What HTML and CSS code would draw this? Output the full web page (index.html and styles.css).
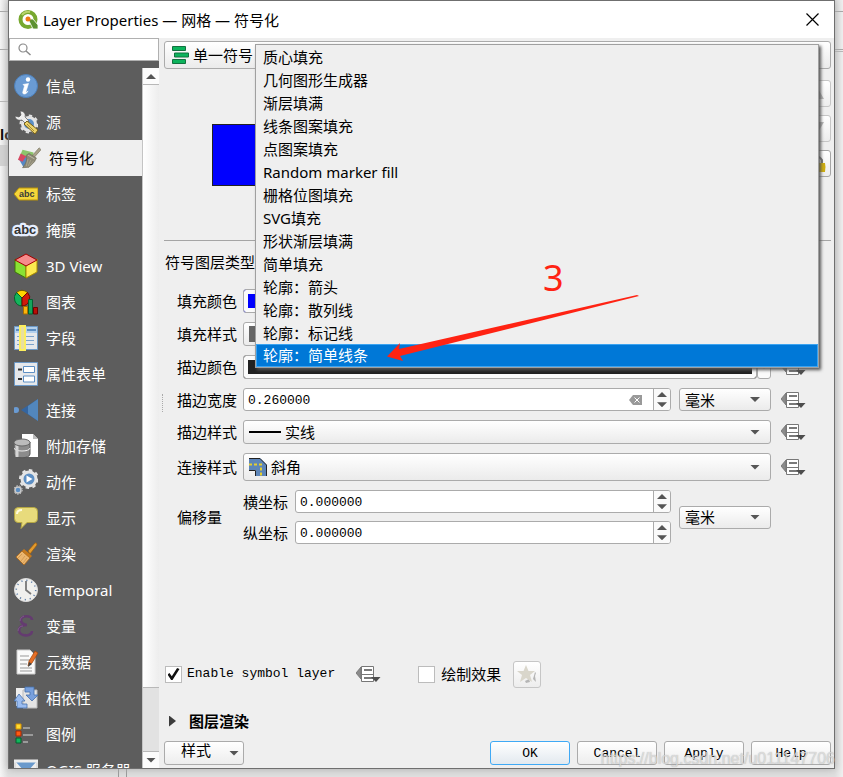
FILE: index.html
```html
<!DOCTYPE html>
<html lang="zh-CN">
<head>
<meta charset="utf-8">
<title>Layer Properties — 网格 — 符号化</title>
<link rel="stylesheet" href="styles.css">
</head>
<body>
<svg class="defs" aria-hidden="true">
  <symbol id="override" viewBox="0 0 25 18">
    <path d="M0 8L5 2v12z" fill="#8b8b8b" stroke="#6e6e6e" stroke-width=".8"/>
    <path d="M5.500 1.500h12v15h-12z" fill="#fff" stroke="#777"/>
    <path d="M5 9.500h13" stroke="#777"/>
    <path d="M8 5h8M8 13h14" stroke="#4d4d4d" stroke-width="1.500"/>
    <path d="M15 12h9.500L20 17z" fill="#4d4d4d"/>
  </symbol>
</svg>
<div class="backdrop" aria-hidden="true"><b>lo</b></div>
<div class="window">
  <header class="titlebar">
    <svg width="21" height="20" viewBox="0 0 21 20">
      <circle cx="10" cy="9.500" r="7.500" fill="none" stroke="#77a82f" stroke-width="4"/>
      <path d="M4 5a7.500 7.500 0 0 1 8-3" fill="none" stroke="#b8d46b" stroke-width="2"/>
      <path d="M10 9h5l5 6v4h-5z" fill="#5c9130" stroke="#fff" stroke-width=".8"/>
      <circle cx="10" cy="9" r="2.500" fill="#ee7913"/>
    </svg>
    <h1>Layer Properties — 网格 — 符号化</h1>
    <button class="close" aria-label="关闭"><svg width="13" height="13" viewBox="0 0 13 13"><path d="M.5.500l12 12M12.500.500l-12 12" stroke="#000" stroke-width="1.200"/></svg></button>
  </header>
  <div class="content">
    <aside class="sidebar">
      <label class="search">
        <svg width="13" height="13" viewBox="0 0 13 13"><circle cx="5" cy="5" r="4" fill="none" stroke="#8a8a8a" stroke-width="1.200"/><path d="M8 8l4.500 4" stroke="#8a8a8a" stroke-width="1.500"/></svg>
        <input type="text" aria-label="搜索">
      </label>
      <div class="side-body">
        <nav class="pages">
          <a href="#"><svg viewBox="0 0 24 24"><circle cx="12" cy="12" r="11.500" fill="#6a9bd3" stroke="#4d7fb8"/><circle cx="14" cy="5.500" r="2.200" fill="#fff"/><path d="M9 10.500l5.500-1-2.500 8c-.3 1 1 .8 2-.6-1 3.500-6 4.300-5.200 1.200L10.500 12z" fill="#fff" stroke="#fff" stroke-width=".6"/></svg>信息</a>
          <a href="#"><svg viewBox="0 0 24 24"><circle cx="15" cy="14" r="6.500" fill="#5d8fc4" stroke="#e3e3e3" stroke-width="3"/><circle cx="15" cy="14" r="8.500" fill="none" stroke="#e3e3e3" stroke-width="2" stroke-dasharray="3.300 3.300"/><path d="M1 6l4 1 2-2-1-4c4 0 6 3 5 6l4 4-3 3-4-4C4 11 1 9 1 6z" fill="#eee" stroke="#555" stroke-width=".7"/><path d="M10 14l3-3 11 9-3 4z" fill="#ecd36a" stroke="#765f18"/><path d="M13 14l7 7" stroke="#a88a30"/></svg>源</a>
          <a href="#" class="current" aria-current="page"><svg viewBox="0 0 26 24"><path d="M6 3l12 3-2 8-13-4z" fill="#8cc56c"/><path d="M2 13l8-3 6 6-9 6z" fill="#5688c4"/><path d="M4 7l6 3-4 6-5-2z" fill="#d84762"/><path d="M16 10l8-9 2 2-8 9z" fill="#aaa38a" stroke="#77735f" stroke-width=".7"/><path d="M10 9l3-2 8 5-2 4-6 6-7 .5c4-5 5-8 4-13.500z" fill="#8d8976" stroke="#6d6957" stroke-width=".7"/><path d="M12 13l-2 8M15 14l-3 7M18 15l-4 5" stroke="#aaa58d"/><path d="M12 9l7 4" stroke="#c2bea8"/></svg>符号化</a>
          <a href="#"><svg viewBox="0 0 24 24"><path d="M0 12l5-6h19v12H5z" fill="#f5d63a" stroke="#b8920a"/><text x="5" y="15" class="tag-text">abc</text></svg>标签</a>
          <a href="#"><svg viewBox="0 0 26 24" overflow="visible"><text x="0" y="16" class="mask-text">abc</text></svg>掩膜</a>
          <a href="#"><svg viewBox="0 0 24 26"><path d="M1 6l11 6v13L1 19z" fill="#8ae234" stroke="#3d7809"/><path d="M23 6l-11 6v13l11-6z" fill="#fce94f" stroke="#a98b00"/><path d="M12 1l11 6-11 6L1 7z" fill="#f78c8c" stroke="#a40000"/></svg>3D View</a>
          <a href="#"><svg viewBox="0 0 24 26"><path d="M8 9L2.500 3.500a8 8 0 0 1 11 0z" fill="#ffd500" stroke="#705900"/><path d="M8 9L2.500 3.500A8 8 0 0 0 8 17z" fill="#14b45c" stroke="#04602c"/><path d="M8 9l5.500-5.500A8 8 0 0 1 8 17z" fill="#d11a0b" stroke="#6d0a00"/><path d="M9.500 17.500h4V25h-4z" fill="#fcb40b" stroke="#a86d00"/><path d="M14.500 10.500h4V25h-4z" fill="#14a45c" stroke="#045f30"/><path d="M19.500 18.500h4V25h-4z" fill="#b90e08" stroke="#6d0000"/></svg>图表</a>
          <a href="#"><svg viewBox="0 0 24 26"><path d="M.500 1.500h23v23H.500z" fill="#e6e8eb" stroke="#6c99c7"/><path d="M1 2h22v6H1z" fill="#b4d0ec"/><path d="M13 5h9M2 5h3" stroke="#5d8fc4" stroke-width="2"/><path d="M3 11.500h17M3 15.500h17M3 19.500h17" stroke="#7ca3cc"/><path d="M5 0h7v26H5z" fill="#fcee5d"/><path d="M7 2h3v22H7z" fill="#e8dfa0"/></svg>字段</a>
          <a href="#"><svg viewBox="0 0 24 24"><path d="M.500.500h23v23H.500z" fill="#e6e8eb" stroke="#6c99c7"/><path d="M9.500 4.500h11v6h-11zM9.500 14h11v6h-11z" fill="#fff" stroke="#5d8fc4"/><path d="M4 7.500h4M4 17h4" stroke="#333" stroke-width="2"/></svg>属性表单</a>
          <a href="#"><svg viewBox="0 0 24 24"><circle cx="2" cy="12" r="3" fill="#6a9bd3"/><path d="M7 12L24 1v22z" fill="#3465a0"/><path d="M14 8l10-7v22l-10-7z" fill="#5287bd"/></svg>连接</a>
          <a href="#"><svg viewBox="0 0 24 26"><path d="M8 1h11l5 5v18H8z" fill="#fff"/><path d="M19 1v5h5z" fill="#bbb"/><path d="M0 9v12c0 5 16 5 16 0V9z" fill="#8b8b8b" stroke="#555"/><path d="M0 15c0 4 16 4 16 0" fill="none" stroke="#eee"/><path d="M3 12v12" stroke="#d5d5d5" stroke-width="3"/><ellipse cx="8" cy="9.500" rx="8" ry="3.500" fill="#bbb" stroke="#666"/></svg>附加存储</a>
          <a href="#"><svg viewBox="0 0 24 26"><circle cx="15" cy="10" r="7" fill="#5d8fc4" stroke="#e5e5e5" stroke-width="3"/><circle cx="15" cy="10" r="9" fill="none" stroke="#e5e5e5" stroke-width="2" stroke-dasharray="3.500 3.500"/><path d="M12.500 6.500v7l6-3.500z" fill="#fff"/><circle cx="4" cy="21" r="3" fill="#5d8fc4" stroke="#ccc" stroke-width="1.500"/><circle cx="4" cy="21" r="4.300" fill="none" stroke="#ccc" stroke-dasharray="1.500 1.500"/></svg>动作</a>
          <a href="#"><svg viewBox="0 0 24 24"><path d="M4 1.500h16q3.500 0 3.500 4v7q0 4-3.500 4h-7L7 22.500l1-6H4q-3.500 0-3.500-4v-7q0-4 3.500-4z" fill="#e8db7c" stroke="#b5a744"/><path d="M3 8q0-4 5-4" stroke="#fffce0" stroke-width="2" fill="none"/></svg>显示</a>
          <a href="#"><svg viewBox="0 0 24 24"><path d="M14 9l7-8q2-1 2 2l-7 9z" fill="#e39a2d" stroke="#9a5c0b" stroke-width=".7"/><path d="M8 9l8 7-6 7-8-8z" fill="#ebb66f" stroke="#a86518" stroke-width=".8"/><path d="M10 7l8 7-2 2-8-7z" fill="#c77a1d"/><path d="M8 12l-4 4M11 14l-4 5M13 16l-4 5" stroke="#c98f48" stroke-width=".7"/></svg>渲染</a>
          <a href="#"><svg viewBox="0 0 24 24"><circle cx="12" cy="12" r="11.500" fill="#f0f0ee" stroke="#ddd"/><circle cx="12" cy="12" r="9.700" fill="none" stroke="#5d7ea8" stroke-width="1.500" stroke-dasharray="1.200 3.880"/><path d="M12 3v9l5 4" fill="none" stroke="#777" stroke-width="1.800"/></svg>Temporal</a>
          <a href="#"><svg viewBox="0 0 24 24"><path d="M18 6c0-5-11-5-11 0 0 3 3 5 6 5-5 0-8 2-8 5 0 7 13 7 13 1" fill="none" stroke="#643b70" stroke-width="2.600"/><path d="M6 7c0-3 2-4 4-5M4 17c0-3 2-5 5-5" fill="none" stroke="#8a6496" stroke-width=".7"/></svg>变量</a>
          <a href="#"><svg viewBox="0 0 24 26"><path d="M3 1h13l5 5v19H3z" fill="#fafafa" stroke="#ccc"/><path d="M6 7h9M6 11h10M6 15h7M6 19h12M6 22h12" stroke="#999"/><path d="M14 17l1-5 6-10 3 2-6 10z" fill="#e66f27" stroke="#a0460b" stroke-width=".7"/><path d="M14 18l1-5 3 2z" fill="#444"/></svg>元数据</a>
          <a href="#"><svg viewBox="0 0 24 24"><path d="M2 2h12v18H2z" fill="#eee"/><path d="M9 4h14v18H9z" fill="#e4e4e4" stroke="#bbb"/><path d="M11 1h9v8h4l-6 6-6-6h4V6h-5z" fill="#78a0dd" stroke="#456eaa" stroke-width=".8"/><path d="M13 22H3v-7H0l5-7 6 7H8v3h5z" fill="#9abcf0" stroke="#456eaa" stroke-width=".8"/></svg>相依性</a>
          <a href="#"><svg viewBox="0 0 24 24"><path d="M2 2h5v5H2z" fill="#ffdc32" stroke="#d99300"/><path d="M2 9h5v5H2z" fill="#ff5a14" stroke="#a82900"/><path d="M2 16h5v5H2z" fill="#10b55c" stroke="#04602c"/><path d="M9 6h7M9 13h10M9 20h5" stroke="#9a9a9a" stroke-width="2"/></svg>图例</a>
          <a href="#"><svg viewBox="0 0 24 24"><path d="M1 3h22v18H1z" fill="#6999cc" stroke="#ddd" stroke-width="2"/><path d="M2 4l8 9-8 7zM22 4l-8 9 8 7z" fill="#eee"/><path d="M0 3h24" stroke="#eee" stroke-width="3"/></svg>QGIS 服务器</a>
        </nav>
        <div class="scrollbar"><button aria-label="向上"><i class="tri up"></i></button><div class="thumb"></div><div class="track"></div><button aria-label="向下"><i class="tri"></i></button></div>
      </div>
    </aside>
    <div class="splitter"></div>
    <main>
      <div class="combo renderer">
        <svg width="18" height="18" viewBox="0 0 18 18"><path d="M1.500.500h13v4h-13zM3.500 7h14v4h-14zM1.500 13.500h13v4h-13z" fill="#0cb35c" stroke="#12713f"/></svg>
        <select aria-label="渲染器"><option>单一符号</option></select>
      </div>
      <section class="preview">
        <div class="swatch"></div>
        <div class="tools">
          <button aria-label="上移"><svg width="16" height="16" viewBox="0 0 16 16"><path d="M8 1l7 12H1z" fill="#b8b8b8"/></svg></button>
          <button aria-label="下移"><svg width="16" height="16" viewBox="0 0 16 16"><path d="M8 13l7-12H1z" fill="#b8b8b8"/></svg></button>
          <button class="on" aria-label="锁定"><svg width="18" height="18" viewBox="0 0 18 18"><path d="M4 8V5q5-7 10 0v3" fill="none" stroke="#777" stroke-width="2"/><path d="M1 8h16q1 4 0 9H1z" fill="#cfae10"/></svg></button>
        </div>
      </section>
      <h2>符号图层类型</h2>
      <div class="form">
        <label for="fill-color">填充颜色</label>
        <div class="color blue"><button id="fill-color"></button><button aria-label="填充颜色选项"><i class="tri"></i></button></div>
        <button class="override" aria-label="覆盖填充颜色"><svg><use href="#override"/></svg></button>

        <label for="fill-style">填充样式</label>
        <div class="combo h24"><i class="brush"></i><select id="fill-style"></select></div>
        <button class="override" aria-label="覆盖填充样式"><svg><use href="#override"/></svg></button>

        <label for="stroke-color">描边颜色</label>
        <div class="color dark"><button id="stroke-color"></button><button aria-label="描边颜色选项"><i class="tri"></i></button></div>
        <button class="override" aria-label="覆盖描边颜色"><svg><use href="#override"/></svg></button>

        <label for="stroke-width">描边宽度</label>
        <div class="pair">
          <div class="spin"><input id="stroke-width" type="text" value="0.260000"><button class="clear" aria-label="清除"><svg width="13" height="10" viewBox="0 0 13 10"><path d="M0 5l4-5h9v10H4z" fill="#999"/><path d="M5.500 2.500l5 5M10.500 2.500l-5 5" stroke="#fff"/></svg></button><div class="steps"><button aria-label="增加"><i class="tri up"></i></button><button aria-label="减少"><i class="tri"></i></button></div></div>
          <div class="combo unit"><select aria-label="宽度单位"><option>毫米</option></select></div>
        </div>
        <button class="override" aria-label="覆盖描边宽度"><svg><use href="#override"/></svg></button>

        <label for="stroke-style">描边样式</label>
        <div class="combo h24"><i class="line"></i><select id="stroke-style"><option>实线</option></select></div>
        <button class="override" aria-label="覆盖描边样式"><svg><use href="#override"/></svg></button>

        <label for="join-style">连接样式</label>
        <div class="combo join"><svg width="18" height="18" viewBox="0 0 18 18"><path d="M0 0h11l7 7v11H7v-6H0z" fill="#5d85b8"/><path d="M0 .500h11l6.500 6.500v11M0 12.500h6.500V18" fill="none" stroke="#222"/><path d="M0 6.500h12V18" fill="none" stroke="#e6cf2f" stroke-width="2" stroke-dasharray="3 2"/></svg><select id="join-style"><option>斜角</option></select></div>
        <button class="override" aria-label="覆盖连接样式"><svg><use href="#override"/></svg></button>

        <span>偏移量</span>
        <div class="pair">
          <div class="axes">
            <label for="offset-x">横坐标</label>
            <div class="spin"><input id="offset-x" type="text" value="0.000000"><div class="steps"><button aria-label="增加"><i class="tri up"></i></button><button aria-label="减少"><i class="tri"></i></button></div></div>
            <label for="offset-y">纵坐标</label>
            <div class="spin"><input id="offset-y" type="text" value="0.000000"><div class="steps"><button aria-label="增加"><i class="tri up"></i></button><button aria-label="减少"><i class="tri"></i></button></div></div>
          </div>
          <div class="combo unit"><select aria-label="偏移单位"><option>毫米</option></select></div>
        </div>
      </div>
      <div class="checks">
        <label class="latin"><input type="checkbox" checked>Enable symbol layer</label>
        <button class="override" aria-label="覆盖启用状态"><svg><use href="#override"/></svg></button>
        <label class="effects"><input type="checkbox">绘制效果</label>
        <button class="star" aria-label="效果设置" disabled><svg width="20" height="20" viewBox="0 0 20 20"><path d="M18 8l1 1-1 3 1 6-3-3zM8 17l4-2 1 3-4 1z" fill="#b5b5b5"/><path d="M9 1l2.500 6H18l-5 4 2 7-6-4-6 4 2-7-5-4h6.500z" fill="#d9d6cb"/></svg></button>
      </div>
      <button class="group"><i></i>图层渲染</button>
      <footer>
        <button class="push style">样式<i class="tri"></i></button>
        <button class="push default">OK</button>
        <button class="push">Cancel</button>
        <button class="push">Apply</button>
        <button class="push">Help</button>
      </footer>
      <ul class="menu" role="listbox" aria-label="符号图层类型">
        <li role="option">质心填充</li>
        <li role="option">几何图形生成器</li>
        <li role="option">渐层填满</li>
        <li role="option">线条图案填充</li>
        <li role="option">点图案填充</li>
        <li role="option">Random marker fill</li>
        <li role="option">栅格位图填充</li>
        <li role="option">SVG填充</li>
        <li role="option">形状渐层填满</li>
        <li role="option">简单填充</li>
        <li role="option">轮廓：箭头</li>
        <li role="option">轮廓：散列线</li>
        <li role="option">轮廓：标记线</li>
        <li role="option" aria-selected="true">轮廓：简单线条</li>
      </ul>
      <div class="note" aria-hidden="true">
        <span>3</span>
        <svg width="254" height="68" viewBox="0 0 254 68"><path d="M1 61.500L14 48l-1 6L251 0l2 1L14 61l3 5z" fill="#ff2313"/></svg>
      </div>
    </main>
  </div>
</div>
<div class="watermark">https://blog.csdn.net/u011147706</div>
</body>
</html>
```

FILE: styles.css
```css
* { box-sizing: border-box; }

body {
  margin: 0;
  height: 100vh;
  padding: 0 8px 8px;
  display: flex;
  overflow: hidden;
  position: relative;
  background: #e4e4e4;
  color: #000;
  font: 15px/20px "Noto Sans", "Noto Sans CJK SC", sans-serif;
}

button, input, select { font: inherit; color: inherit; margin: 0; padding: 0; }
button { border: 0; background: none; }
svg { flex: none; display: block; }
.defs { position: absolute; width: 0; height: 0; }

.backdrop {
  position: absolute;
  inset: 0;
  background:
    linear-gradient(#a8a8a8, #a8a8a8) 0 11px / 100% 1px no-repeat,
    linear-gradient(#a8a8a8, #a8a8a8) 0 49px / 100% 1px no-repeat,
    linear-gradient(#b8b8b8, #b8b8b8) 100% 51px / 8px 1px no-repeat,
    linear-gradient(#b8b8b8, #b8b8b8) 0 101px / 8px 1px no-repeat,
    linear-gradient(#d3d3d3, #d3d3d3) 0 145px / 8px 21px no-repeat,
    linear-gradient(#999, #999) 118px 100% / 1px 8px no-repeat,
    linear-gradient(#999, #999) 126px 100% / 1px 8px no-repeat,
    linear-gradient(90deg, #f6f6f6, #e0e0e0 8px, #e0e0e0 calc(100% - 8px), #f0f0f0);
}
.backdrop b { position: absolute; top: 125px; left: 0; font-size: 14px; }

.window {
  position: relative;
  flex: 1;
  min-width: 0;
  display: flex;
  flex-direction: column;
  border: 1px solid #6f6f6f;
  background: #efefef;
  box-shadow: 0 0 8px #aaa;
}

.titlebar {
  flex: none;
  height: 37px;
  padding: 0 15px 0 9px;
  display: flex;
  align-items: center;
  gap: 4px;
  background: #fff;
}
h1 { flex: 1; margin: 0; font-size: 15px; font-weight: 400; }
.content { flex: 1; min-height: 0; display: flex; }

.sidebar { flex: none; width: 150px; display: flex; flex-direction: column; background: #5d5d5d; }
.search {
  flex: none;
  height: 23px;
  display: flex;
  align-items: center;
  gap: 4px;
  padding: 0 8px;
  background: #fff;
  border: 1px solid #b0b0b0;
}
.search input { flex: 1; min-width: 0; border: 0; outline: 0; background: none; }
.side-body { flex: 1; min-height: 0; margin-top: 7px; display: flex; }
.pages { flex: 1; overflow: hidden; }
.pages a {
  height: 36px;
  padding-left: 5px;
  display: flex;
  align-items: center;
  gap: 8px;
  color: #fff;
  text-decoration: none;
  white-space: nowrap;
}
.pages a.current { padding-left: 8px; background: #efefef; color: #000; }
.pages svg { width: 24px; height: 26px; }
.tag-text { font: bold 9px "Liberation Sans", sans-serif; fill: #3a3a3a; }
.mask-text {
  font: bold 14px "Liberation Sans", sans-serif;
  fill: #333;
  stroke: #e6eeff;
  stroke-width: 5px;
  stroke-linejoin: round;
  paint-order: stroke;
}

.scrollbar { flex: none; width: 17px; display: flex; flex-direction: column; border-left: 1px solid #c4c4c4; }
.scrollbar button { height: 16px; display: grid; place-items: center; background: #fcfcfc; }
.thumb { flex: 19; background: linear-gradient(90deg, #fff, #ededed); border: solid #b8b8b8; border-width: 1px 0; }
.track { flex: 2; background: #e2e2e2; border-bottom: 1px solid #b8b8b8; }

.tri { width: 10px; height: 5px; background: #555; clip-path: polygon(0 0, 100% 0, 50% 100%); }
.tri.up { transform: rotate(180deg); }

.splitter { flex: none; width: 5px; height: 18px; align-self: center; margin: 0; }
.splitter::before { content: ""; display: block; height: 18px; margin-left: 3px; border-left: 1px dotted #aaa; }

main {
  position: relative;
  flex: 1;
  min-width: 0;
  display: flex;
  flex-direction: column;
  padding: 3px 3px 3px 0;
}

.combo {
  display: flex;
  align-items: center;
  gap: 4px;
  height: 23px;
  padding: 0 10px 0 5px;
  border: 1px solid #ababab;
  border-radius: 3px;
  background: linear-gradient(#fff, #ebebeb);
}
.combo::after { content: ""; width: 10px; height: 5px; background: #555; clip-path: polygon(0 0, 100% 0, 50% 100%); }
.combo select { flex: 1; min-width: 0; border: 0; outline: 0; background: none; appearance: none; line-height: 20px; }
.renderer { flex: none; height: 28px; padding-left: 6px; }
.h24 { height: 24px; }
.join { height: 28px; }
.unit { flex: none; width: 92px; }
.line { width: 32px; height: 2px; background: #000; }
.brush { width: 32px; height: 16px; background: #666; }

.preview { flex: none; height: 172px; display: flex; align-items: center; justify-content: space-between; border-bottom: 1px solid #a5a5a5; padding-left: 48px; }
.swatch { width: 100px; height: 62px; background: #00f; border: 1px solid #222; }
.tools { align-self: flex-start; margin-top: 11px; display: flex; flex-direction: column; gap: 8px; }
.tools button, .star {
  width: 28px;
  height: 27px;
  display: grid;
  place-items: center;
  border: 1px solid #c6c6c6;
  border-radius: 3px;
  background: linear-gradient(#fff, #ededed);
}
.tools .on { border-color: #a5a5a5; }

h2 { flex: none; margin: 0 0 6px; padding-left: 1px; font-size: 15px; font-weight: 400; line-height: 42px; }

.form {
  display: grid;
  grid-template-columns: 57px minmax(0, 1fr) 26px;
  gap: 9px;
  align-items: center;
  padding: 0 25px 0 13px;
}
.form label, .form span { white-space: nowrap; line-height: 22px; }
.override { width: 26px; height: 20px; display: grid; place-items: center; }
.override svg { width: 25px; height: 18px; }

.color { display: flex; height: 24px; }
.color button { border: 1px solid #ababab; border-radius: 3px; background: #fbfbfb; }
.color button:first-child { flex: 1; }
.color button:last-child { width: 14px; display: grid; place-items: center; }
.color .tri { width: 6px; height: 3px; }
.blue button:first-child { background: #00f; box-shadow: inset 0 0 0 4px #fbfbfb; }
.dark button:first-child { background: #222; box-shadow: inset 0 0 0 4px #fbfbfb; }

.pair { display: flex; align-items: center; gap: 8px; }
.spin {
  flex: 1;
  display: flex;
  align-items: center;
  height: 23px;
  overflow: hidden;
  border: 1px solid #ababab;
  border-radius: 3px;
  background: #fff;
}
.spin input { flex: 1; min-width: 0; padding: 2px 0 0 4px; border: 0; outline: 0; background: none; }
.spin input, .latin, .push { font-family: "Liberation Mono", "Noto Sans CJK SC", monospace; font-size: 13px; }
.clear { margin-right: 11px; }
.steps { width: 17px; align-self: stretch; display: grid; border-left: 1px solid #ababab; background: #fafafa; }
.steps button { display: grid; place-items: center; }
.axes { flex: 1; display: grid; grid-template-columns: 44px minmax(0, 1fr); gap: 8px; align-items: center; }

.checks { flex: none; height: 28px; margin-top: auto; display: flex; align-items: center; padding-left: 1px; }
.checks label { display: flex; align-items: center; gap: 5px; white-space: nowrap; }
.checks .override { margin-left: 20px; }
.checks .effects { margin: 0 12px 0 37px; gap: 6px; }
input[type="checkbox"] {
  appearance: none;
  width: 17px;
  height: 17px;
  display: grid;
  place-items: center;
  border: 1px solid #bcbcbc;
  background: #fff;
}
input[type="checkbox"]:checked::before {
  content: "";
  width: 12px;
  height: 12px;
  background: #111;
  clip-path: polygon(0 55%, 16% 42%, 36% 68%, 80% 0, 100% 8%, 42% 100%, 30% 100%);
}

.group { flex: none; height: 24px; margin: 21px 0 8px; padding-left: 5px; display: flex; align-items: center; gap: 13px; font-weight: 700; }
.group i { width: 7px; height: 11px; background: #3c3c3c; clip-path: polygon(0 0, 100% 50%, 0 100%); }

footer { flex: none; display: flex; gap: 7px; }
.push { width: 80px; height: 24px; padding-top: 2px; border: 1px solid #ababab; border-radius: 3px; background: linear-gradient(#fff, #ededed); }
.push.default { border-color: #3fa9f5; background: linear-gradient(#fff, #e2e9ef); }
.push.style { margin-right: auto; display: flex; align-items: center; justify-content: space-between; padding: 0 4px 0 16px; font-size: 15px; }

.menu {
  position: absolute;
  top: 6px;
  left: 91px;
  right: 15px;
  margin: 0;
  padding: 0;
  list-style: none;
  border: 1px solid #a0a0a0;
  background: #efefef;
  box-shadow: 2px 2px 3px #555;
}
.menu li { height: 23px; padding-left: 7px; line-height: 25px; }
.menu [aria-selected="true"] { background: #0078d7; color: #fff; box-shadow: inset 0 0 0 1px #3ba3f0; line-height: 23px; }

.note { position: absolute; top: 219px; left: 222px; color: #ff2313; }
.note span { display: block; height: 38px; padding-left: 157px; font-size: 36px; line-height: 42px; }

.watermark {
  position: absolute;
  right: 8px;
  bottom: 8px;
  font: 16px/20px "Liberation Sans", sans-serif;
  color: rgba(235, 235, 235, .7);
  text-shadow: 0 0 1px rgba(120, 120, 120, .6);
}
```
